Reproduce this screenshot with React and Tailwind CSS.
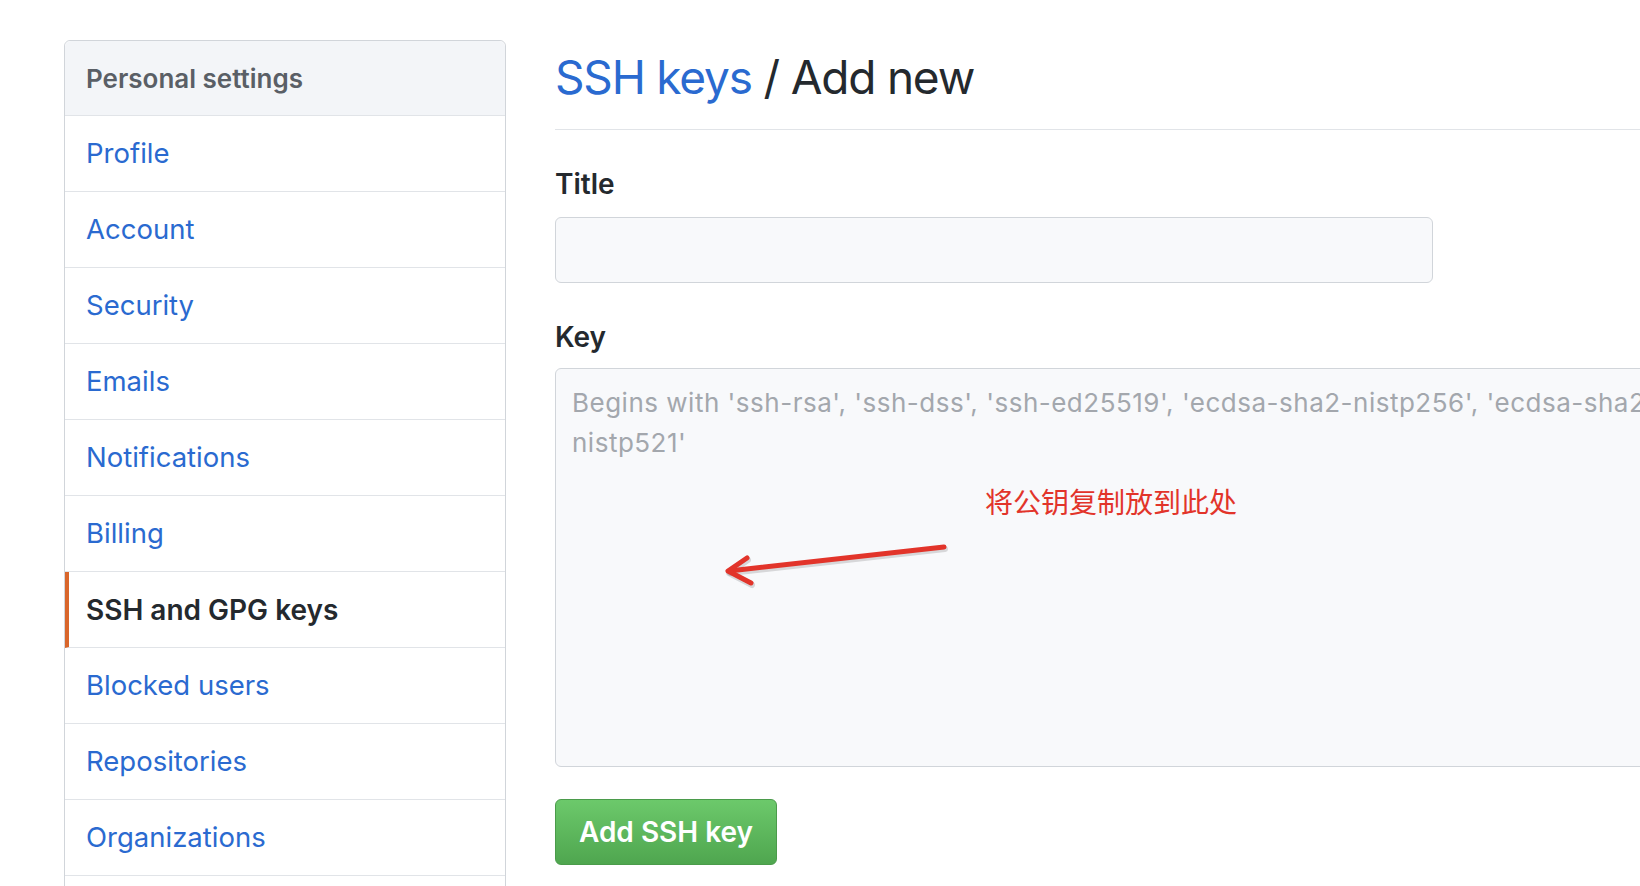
import { useState } from 'react';

const items = [
  'Profile',
  'Account',
  'Security',
  'Emails',
  'Notifications',
  'Billing',
  'SSH and GPG keys',
  'Blocked users',
  'Repositories',
  'Organizations',
  'Saved replies',
];

function Sidebar() {
  const active = 'SSH and GPG keys';
  return (
    <nav className="w-[442px] shrink-0 rounded-t-[6px] border border-[#d1d5da] bg-white">
      <div className="flex h-[75px] items-center rounded-t-[6px] border-b border-[#e1e4e8] bg-[#f3f5f8] px-[21px] text-[26px] font-semibold text-[#5a5f66]">
        Personal settings
      </div>
      {items.map((item) =>
        item === active ? (
          <div
            key={item}
            className="flex h-[76px] items-center border-b border-l-4 border-b-[#e1e4e8] border-l-[#d9662b] pl-[17px] text-[28px] font-semibold text-[#24292e]"
          >
            {item}
          </div>
        ) : (
          <a
            key={item}
            href="#"
            className="flex h-[76px] items-center border-b border-[#e1e4e8] px-[21px] text-[27.5px] text-[#2a6ad0]"
          >
            {item}
          </a>
        )
      )}
    </nav>
  );
}

function Arrow() {
  return (
    <svg className="absolute left-0 top-0 h-[240px] w-[420px]" viewBox="0 0 420 240" fill="none">
      <g stroke="#00000022" strokeWidth="6" strokeLinecap="round" strokeLinejoin="round" transform="translate(1 2)">
        <path d="M388 178 L173 202" />
        <path d="M191 189 L172 202 L195 214" />
      </g>
      <g stroke="#e2342a" strokeWidth="5" strokeLinecap="round" strokeLinejoin="round">
        <path d="M388 178 L173 202" />
        <path d="M191 189 L172 202 L195 214" />
      </g>
    </svg>
  );
}

export default function App() {
  const [title, setTitle] = useState('');
  return (
    <div
      className="h-[886px] w-full overflow-hidden bg-white"
      style={{ fontFamily: 'Inter, "Noto Sans CJK SC", sans-serif' }}
    >
      <div className="flex items-start gap-[49px] pl-[64px] pt-[40px]">
        <Sidebar />
        <main className="w-[1300px] shrink-0 pt-[7px]">
          <h1 className="border-b border-[#e1e4e8] pb-[22px] text-[46px] font-normal leading-[60px] tracking-[-1.2px] text-[#24292e]">
            <a href="#" className="text-[#2a6ad0]">SSH keys</a> / Add new
          </h1>

          <label className="mt-[37px] block text-[28px] font-semibold leading-[34px] text-[#24292e]">Title</label>
          <input
            value={title}
            onChange={(e) => setTitle(e.target.value)}
            className="mt-[16px] block h-[66px] w-[878px] rounded-[6px] border border-[#d1d5da] bg-[#f8f9fb] px-4 text-[24px] outline-none"
          />

          <label className="mt-[37px] block text-[28px] font-semibold leading-[34px] text-[#24292e]">Key</label>
          <div className="relative mt-[14px] h-[399px] w-[1200px] rounded-[6px] border border-[#d1d5da] bg-[#f8f9fb] pl-[16px] pt-[14px] text-[26px] leading-[40px] tracking-[0.5px] text-[#a3a7ad]">
            <div className="whitespace-nowrap">
              Begins with 'ssh-rsa', 'ssh-dss', 'ssh-ed25519', 'ecdsa-sha2-nistp256', 'ecdsa-sha2-nistp384', or 'ecdsa-sha2-
            </div>
            <div className="whitespace-nowrap">nistp521'</div>
            <Arrow />
            <div
              className="absolute left-[429px] top-[117px] whitespace-nowrap text-[28px] leading-[30px] tracking-normal text-[#e2342a]"
              style={{ fontFamily: '"Noto Sans CJK SC", sans-serif' }}
            >
              将公钥复制放到此处
            </div>
          </div>

          <button className="mt-[32px] flex h-[66px] w-[222px] items-center justify-center rounded-[6px] border border-[#4b9b4b] bg-gradient-to-b from-[#6cc96b] to-[#4fa64f] text-[28px] font-semibold text-white">
            Add SSH key
          </button>
        </main>
      </div>
    </div>
  );
}
